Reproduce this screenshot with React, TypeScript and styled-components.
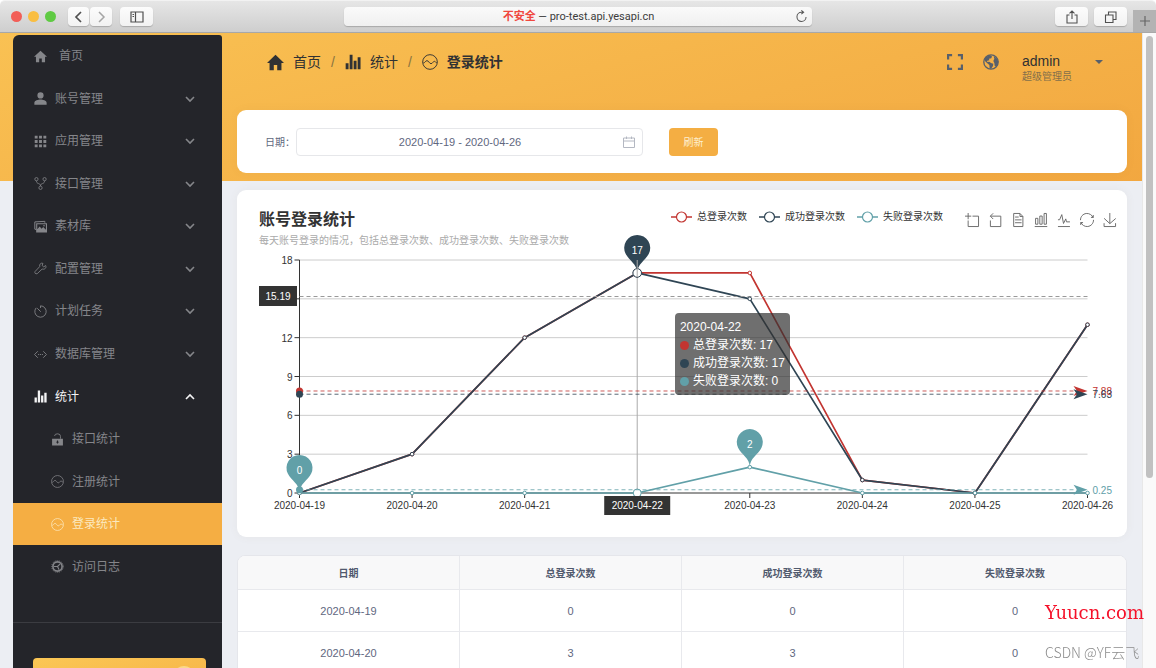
import React from "react";
import styled, { createGlobalStyle } from "styled-components";

const sans = `"Liberation Sans", "Noto Sans CJK SC", sans-serif`;
const ui = `Roboto, "Noto Sans CJK SC", sans-serif`;

const Global = createGlobalStyle`
  *, *::before, *::after { box-sizing: border-box; }
  body { margin: 0; background: #fff; font-family: ${sans}; font-size: 12px; overflow: hidden; }
  button { font-family: inherit; border: 0; padding: 0; background: none; cursor: pointer; }
  a { color: inherit; text-decoration: none; }
`;

/* ---------- icons ---------- */

const Glyph = styled.svg<{ $size: number; $stroke?: number }>`
  display: block;
  flex: none;
  width: ${(p) => p.$size}px;
  height: ${(p) => p.$size}px;
  fill: ${(p) => (p.$stroke ? "none" : "currentColor")};
  stroke: ${(p) => (p.$stroke ? "currentColor" : "none")};
  stroke-width: ${(p) => p.$stroke ?? 0};
`;

type IconDef = { box: string; d: string; stroke?: number };

const icons: Record<string, IconDef> = {
  home: { box: "2 2 20 20", d: "M10 21v-6h4v6h5v-8.500h3L12 3 2 12.500h3V21z" },
  person: { box: "3 3 18 18", d: "M12 12a4.300 4.300 0 1 0 0-8.600 4.300 4.300 0 0 0 0 8.600zM12 13.500c-3 0-8.500 1.500-8.500 4.500v2.500h17V18c0-3-5.500-4.500-8.500-4.500z" },
  apps: { box: "3 3 18 18", d: "M4 8h4V4H4zm6 12h4v-4h-4zm-6 0h4v-4H4zm0-6h4v-4H4zm6 0h4v-4h-4zm6-10v4h4V4zm-6 4h4V4h-4zm6 6h4v-4h-4zm0 6h4v-4h-4z" },
  fork: { box: "0 0 24 24", stroke: 1.5, d: "M4.500 7a3 3 0 1 0 0-6 3 3 0 0 0 0 6zM19.500 7a3 3 0 1 0 0-6 3 3 0 0 0 0 6zM12 23a3 3 0 1 0 0-6 3 3 0 0 0 0 6zM4.500 7c0 3 1.500 4.500 3.500 5s4 1.500 4 4.500M19.500 7c0 3-1.500 4.500-3.500 5s-4 1.500-4 4.500" },
  code: { box: "0 0 24 24", stroke: 1.6, d: "M7 6l-6 6 6 6M17 6l6 6-6 6M7.500 12h2M11 12h2M14.500 12h2" },
  timer: { box: "0 0 24 24", stroke: 1.6, d: "M12 1.500a10.500 10.500 0 1 1-8 3.700M12 1.500v4M6 6l6.500 6.500" },
  wrench: { box: "0 0 24 24", stroke: 1.5, d: "M21.500 6.500l-3.500 2.500-3-2.500 1.500-4C13 1 9.500 4 10.500 8.500L2 17.500c-1.500 2 .5 5.500 4 4l9-8.500c5 1.500 8.500-2.500 6.500-6.500z" },
  bars: { box: "0 0 24 24", d: "M1 14h4.300v9H1zM7 1h4.300v22H7zM13 10h4.300v13H13zM19 5h4.300v18H19z" },
  wave: { box: "0 0 24 24", stroke: 1.4, d: "M12 1a11 11 0 1 0 0 22 11 11 0 0 0 0-22zM2 13.500c2.500 0 3-3.500 5.500-3.500s3.500 4.500 6 4.500 3-3.500 5-3.500 2 2 3.500 2" },
  corners: { box: "0 0 16 16", stroke: 2.2, d: "M1.100 5.500V1.200h4M10.900 1.200h4v4.300M14.900 10.500v4.300h-4M5.100 14.800h-4v-4.300" },
  down: { box: "0 0 12 12", stroke: 1.6, d: "M2 4l4 4 4-4" },
  up: { box: "0 0 12 12", stroke: 1.6, d: "M2 8l4-4 4 4" },
  caret: { box: "0 0 10 10", d: "M1 3h8L5 7z" },
  back: { box: "0 0 14 14", stroke: 1.7, d: "M9 2L4 7l5 5" },
  forward: { box: "0 0 14 14", stroke: 1.5, d: "M5 2l5 5-5 5" },
  panel: { box: "0 0 14 14", stroke: 1.2, d: "M1 2h12v10H1zM5.500 2v10M2.500 4.500h1.500M2.500 6.500h1.500" },
  share: { box: "0 0 14 14", stroke: 1.1, d: "M4.500 5H2v8h10V5H9.500M7 9V1M4.500 3.300L7 1l2.500 2.300" },
  tabs: { box: "0 0 14 14", stroke: 1.1, d: "M1.500 5h7.500v7.500H1.500zM4.500 5V2H12v7.500H9" },
  plus: { box: "0 0 12 12", stroke: 1.2, d: "M6 1v10M1 6h10" },
  reload: { box: "0 0 14 14", stroke: 1.1, d: "M8.500 2.500H7A4.900 4.900 0 1 0 11.900 7.500M6.800 0.500l2.500 2-2.500 2" },
  calendar: { box: "0 0 12 12", stroke: 1, d: "M.5 2h11v9.500H.5zM.5 5h11M3.500 0.500v2.500M8.500 0.500v2.500" },
};

const Icon = ({ name, size }: { name: string; size: number }) => {
  const def = icons[name];
  return (
    <Glyph viewBox={def.box} $size={size} $stroke={def.stroke} aria-hidden>
      <path d={def.d} />
    </Glyph>
  );
};

const GlobeIcon = () => (
  <Glyph viewBox="0 0 24 24" $size={16} aria-hidden>
    <circle cx="12" cy="12" r="10.800" fill="none" stroke="currentColor" strokeWidth="2" />
    <path d="M3 5.500L10 1.500l3.500 2-1 3-3.500.5.500 2.500-3 .5-.5 2 3.500-.5 2.500 2 3.500 1-.5 3.500-3 4.500-2-1-.5-5-3.500-3-3.500-3.500zM16 3.500l4 2.500 3 5-1 5-2.500 3-2-1.500-.5-4-1.500-3 1.500-3.500z" />
  </Glyph>
);

const GalleryIcon = () => (
  <Glyph viewBox="0 0 24 24" $size={13} aria-hidden>
    <path d="M4 17.500L1.500 17V3.500L20 2.500V5" fill="none" stroke="currentColor" strokeWidth="1.800" />
    <path fillRule="evenodd" d="M4 6h20v17H4zM6 8v9l4.500-5 3.500 4 3-3 5 5V8z" />
    <circle cx="18.500" cy="10.500" r="1.500" />
  </Glyph>
);

const LockIcon = () => (
  <Glyph viewBox="0 0 24 24" $size={13} aria-hidden>
    <path d="M6.500 5.500a5.500 4.500 0 0 1 11 1V10.500" fill="none" stroke="currentColor" strokeWidth="1.500" />
    <path fillRule="evenodd" d="M2 10.500h20V23H2zM11 14v2H9.500v1.500H11v2h2v-2h1.500V16H13v-2z" />
  </Glyph>
);

const LogIcon = () => (
  <Glyph viewBox="0 0 24 24" $size={13} aria-hidden>
    <circle cx="12" cy="12" r="8.500" fill="none" stroke="currentColor" strokeWidth="3" />
    <circle cx="12" cy="12" r="10.800" fill="none" stroke="currentColor" strokeWidth="1.500" strokeDasharray="2 2" />
    <path d="M12 12l5-5M12 12H5M12 12l3 6" fill="none" stroke="currentColor" strokeWidth="2" />
  </Glyph>
);

/* ---------- browser chrome ---------- */

const Window = styled.div`
  display: flex;
  flex-direction: column;
  height: 100vh;
  overflow: hidden;
`;

const TitleBar = styled.header`
  display: grid;
  grid-template-columns: 1fr 468px 1fr;
  align-items: center;
  flex: none;
  height: 33px;
  border-bottom: 1px solid #a8a8a8;
  border-top: 1px solid #f2f2f2;
  border-radius: 5px 5px 0 0;
  background: linear-gradient(#e6e6e6, #cecece);
`;

const BarGroup = styled.div<{ $end?: boolean }>`
  display: flex;
  align-items: center;
  justify-content: ${(p) => (p.$end ? "flex-end" : "flex-start")};
  gap: 6px;
  height: 31px;
  padding-left: ${(p) => (p.$end ? 0 : 11)}px;
`;

const Light = styled.span<{ $color: string }>`
  width: 11px;
  height: 11px;
  border-radius: 50%;
  background: ${(p) => p.$color};
`;

const Segments = styled.div`
  display: flex;
  gap: 1px;
  margin: 0 2px 0 6px;
`;

const ChromeButton = styled.button<{ $width: number; $dim?: boolean }>`
  display: grid;
  place-items: center;
  width: ${(p) => p.$width}px;
  height: 19px;
  border-radius: 4px;
  background: linear-gradient(#fcfcfc, #f2f2f2);
  box-shadow: 0 1px 1px rgba(0, 0, 0, 0.2);
  color: ${(p) => (p.$dim ? "#a5a5a5" : "#505050")};
`;

const Tabs = styled.div`
  display: flex;
  align-items: center;
  align-self: stretch;
`;

const Address = styled.button`
  display: flex;
  align-items: center;
  height: 19px;
  padding: 0 4px 0 18px;
  border-radius: 4px;
  background: linear-gradient(#fafafa, #f0f0f0);
  box-shadow: 0 1px 1px rgba(0, 0, 0, 0.2);
  color: #555;
  font-family: ${ui};
  font-size: 11px;
  line-height: 16px;
`;

const AddressText = styled.span`
  flex: 1;
  color: #3c3c3c;
`;

const Unsafe = styled.span`
  color: #f0483e;
  font-weight: 700;
`;

const NewTab = styled.button`
  display: grid;
  place-items: center;
  align-self: flex-end;
  width: 23px;
  height: 22px;
  background: #b3b3b3;
  color: #666;
`;

/* ---------- page frame ---------- */

const Page = styled.div`
  display: flex;
  flex: 1;
  min-height: 0;
  padding-left: 13px;
  background: linear-gradient(165deg, #f9c153, #f2a740) 0 0 / 100% 148px no-repeat #eceef3;
`;

const Sidebar = styled.aside`
  flex: none;
  width: 209px;
  margin-top: 2px;
  border-radius: 6px 3px 0 0;
  background: #24252a;
  overflow: hidden;
`;

const Nav = styled.nav`
  display: grid;
  grid-auto-rows: 1fr;
  height: 553px;
`;

const NavItem = styled.a<{ $sub?: boolean; $home?: boolean; $state?: "open" | "current" }>`
  display: flex;
  align-items: center;
  gap: ${(p) => (p.$home ? 12 : 8)}px;
  padding: 0 26px 0 ${(p) => (p.$sub ? 38 : 21)}px;
  font-size: 12px;
  line-height: 18px;
  text-align: left;
  color: ${(p) => (p.$state === "open" ? "#f4f4f5" : p.$state === "current" ? "#fbe9bf" : "#85868a")};
  background: ${(p) => (p.$state === "current" ? "#f5ae43" : "transparent")};
`;

const NavText = styled.span`
  flex: 1;
`;

const SidebarFoot = styled.div`
  margin-top: 34px;
  padding: 35px 16px 0 20px;
  border-top: 1px solid #3b3c41;
`;

const Promo = styled.button`
  display: flex;
  justify-content: flex-end;
  width: 100%;
  height: 60px;
  padding: 8px 11px;
  border-radius: 4px;
  background: linear-gradient(165deg, #fbc755, #f4ad43);
`;

const PromoBadge = styled.span`
  width: 22px;
  height: 22px;
  border-radius: 50%;
  background: #fbd98a;
`;

const Main = styled.main`
  display: flex;
  flex: 1;
  flex-direction: column;
  min-width: 0;
  padding: 0 15px;
`;

const Scroll = styled.div`
  flex: none;
  width: 14px;
  padding: 3px 3px 0 3px;
  border-left: 1px solid #e8e8e8;
  background: #fafafa;
`;

const Thumb = styled.div`
  width: 7px;
  height: 442px;
  border-radius: 4px;
  background: #c1c1c1;
`;

/* ---------- top of the page ---------- */

const TopBar = styled.div`
  display: flex;
  flex: none;
  align-items: flex-start;
  height: 77px;
  padding: 19px 23px 0 30px;
  color: #58606b;
`;

const Crumbs = styled.nav`
  display: flex;
  flex: 1;
  align-items: center;
  height: 20px;
  gap: 9px;
  color: #303133;
  font-size: 14px;
  line-height: 20px;
`;

const Slash = styled.span`
  color: #8a7440;
  padding: 0 1px;
`;

const Current = styled.strong`
  font-weight: 700;
`;

const Tools = styled.div`
  display: flex;
  gap: 20px;
  margin-right: 23px;
`;

const Tool = styled.button`
  display: grid;
  place-items: center;
  height: 20px;
  color: inherit;
`;

const User = styled.div`
  width: 72px;
`;

const UserName = styled.div`
  color: #303133;
  font-size: 14px;
  line-height: 18px;
`;

const UserRole = styled.div`
  color: #84704a;
  font-size: 10px;
  line-height: 14px;
`;

const Card = styled.section`
  flex: none;
  margin-bottom: 17px;
  border-radius: 9px;
  background: #fff;
  box-shadow: 0 0 10px rgba(120, 100, 60, 0.06);
`;

const Filter = styled(Card)`
  display: flex;
  align-items: center;
  height: 63px;
  padding: 0 28px;
`;

const Label = styled.label`
  width: 31px;
  color: #5f6780;
  font-size: 10px;
`;

const DateField = styled.div`
  display: flex;
  align-items: center;
  width: 347px;
  height: 28px;
  margin-right: 26px;
  padding: 0 7px 0 0;
  border: 1px solid #e6e7ea;
  border-radius: 4px;
  color: #b4b8c2;
`;

const DateInput = styled.input`
  flex: 1;
  min-width: 0;
  border: 0;
  outline: 0;
  background: none;
  color: #5f6780;
  font-family: ${sans};
  font-size: 11px;
  text-align: center;
`;

const Refresh = styled.button`
  width: 49px;
  height: 28px;
  border-radius: 4px;
  background: #f4ae43;
  color: #fdf0d2;
  font-size: 10px;
`;

/* ---------- chart ---------- */

const ChartCard = styled(Card)`
  padding-bottom: 1px;
`;

const ChartHead = styled.div`
  display: flex;
  height: 62px;
  padding: 18px 10px 0 22px;
`;

const Titles = styled.div`
  flex: 1;
`;

const ChartTitle = styled.h2`
  margin: 0;
  color: #333;
  font-size: 16px;
  font-weight: 700;
  line-height: 23px;
`;

const Subtitle = styled.p`
  margin: 0;
  color: #aaa;
  font-size: 10px;
  line-height: 20px;
`;

const Legend = styled.div`
  display: flex;
  gap: 12px;
  height: 18px;
  margin-right: 22px;
`;

const LegendItem = styled.button`
  display: flex;
  align-items: center;
  gap: 5px;
  color: #333;
  font-size: 10px;
  line-height: 18px;
`;

const LegendMark = styled.svg`
  width: 21px;
  height: 12px;
`;

const Toolbox = styled.div`
  display: flex;
  gap: 9px;
  height: 14px;
  margin-top: 5px;
  color: #666;
`;

const ToolButton = styled.button`
  color: inherit;
`;

const ToolGlyph = styled.svg`
  display: block;
  width: 14px;
  height: 14px;
  overflow: visible;
  fill: none;
  stroke: currentColor;
  stroke-width: 4;
`;

const Plot = styled.div`
  position: relative;
`;

const PlotSvg = styled.svg`
  display: block;
  width: 100%;
  overflow: visible;
  font-family: ${sans};
  font-size: 10px;
`;

const Tip = styled.div`
  position: absolute;
  left: 49.2%;
  top: 61px;
  padding: 5px;
  border-radius: 4px;
  background: rgba(50, 50, 50, 0.7);
  color: #fff;
  font-size: 12px;
  line-height: 18px;
  white-space: nowrap;
`;

const TipRow = styled.div`
  display: flex;
  align-items: center;
  gap: 4px;
`;

const TipDot = styled.span<{ $color: string }>`
  width: 9px;
  height: 9px;
  border-radius: 50%;
  background: ${(p) => p.$color};
`;

const dates = ["2020-04-19", "2020-04-20", "2020-04-21", "2020-04-22", "2020-04-23", "2020-04-24", "2020-04-25", "2020-04-26"];
const series = [
  { name: "总登录次数", color: "#c23531", values: [0, 3, 12, 17, 17, 1, 0, 13], mean: 7.88 },
  { name: "成功登录次数", color: "#2f4554", values: [0, 3, 12, 17, 15, 1, 0, 13], mean: 7.63 },
  { name: "失败登录次数", color: "#61a0a8", values: [0, 0, 0, 0, 2, 0, 0, 0], mean: 0.25 },
];
const LEFT = 62.5;
const RIGHT = 850.5;
const BASE = 241;
const TOP = 8;
const hovered = 3;
const px = (i: number) => LEFT + (i * (RIGHT - LEFT)) / 7;
const py = (v: number) => BASE - (v * (BASE - TOP)) / 18;

const tools = [
  { label: "区域缩放", d: "M0,13.5h26.900 M13.500,26.900V0 M32.100,13.500H58V58H13.500 V32.100" },
  { label: "区域缩放还原", d: "M22,1.400L9.900,13.500l12.300,12.300 M10.300,13.500H54.900v44.600 H10.300v-26" },
  { label: "数据视图", d: "M17.500,17.300H33 M45.400,29.500h-28 M11.500,2v56H51V14.800L38.400,2H11.500z M38.400,2.200v12.700H51 M45.400,41.700h-28" },
  { label: "切换为柱状图", d: "M6.700,22.900h10V48h-10V22.900zM24.900,13h10v35h-10V13zM43.200,2h10v46h-10V2zM3.100,58h53.700" },
  { label: "切换为折线图", d: "M4.100,28.900h7.100l9.300-22l7.400,38l9.700-19.700l3,12.800h14.900M4.100,58h51.400" },
  { label: "还原", d: "M47,18.900h9.800V8.700 M56.300,20.100 C52.100,9,40.500,0.600,26.800,2.100C12.600,3.700,1.600,16.200,2.100,30.600 M13,41.100H3.100v10.200 M3.700,39.900c4.200,11.100,15.800,19.500,29.500,18 c14.200-1.600,25.200-14.100,24.700-28.500" },
  { label: "保存为图片", d: "M4.700,22.900L29.300,45.500L54.700,23.400M4.600,43.600L4.600,58L53.800,58L53.800,43.600M29.200,45.100L29.200,0" },
];

const Pin = ({ x, y, color, text }: { x: number; y: number; color: string; text: string }) => (
  <g transform={`translate(${x} ${y})`}>
    <path d="M-11.700 -19.400A13 13 0 1 1 11.700 -19.400C8.400 -12.400 0 -9.100 0 0C0 -9.100 -8.400 -12.400 -11.700 -19.400Z" fill={color} />
    <text y={-19} textAnchor="middle" fill="#fff">{text}</text>
  </g>
);

const Chart = () => (
  <Plot>
    <PlotSvg viewBox="0 0 890 284" role="img" aria-label="账号登录统计">
      {[3, 6, 9, 12, 15, 18].map((v) => (
        <line key={v} x1={LEFT} x2={RIGHT} y1={py(v)} y2={py(v)} stroke="#ccc" />
      ))}
      {[0, 3, 6, 9, 12, 15, 18].map((v) => (
        <g key={v}>
          <line x1={LEFT - 5} x2={LEFT} y1={py(v)} y2={py(v)} stroke="#333" />
          {v !== 15 && <text x={LEFT - 7} y={py(v) + 4} textAnchor="end" fill="#333">{v}</text>}
        </g>
      ))}
      <path d={`M${LEFT} ${TOP}V${BASE}H${RIGHT}`} fill="none" stroke="#333" />
      {dates.map((d, i) => (
        <g key={d}>
          <line x1={px(i)} x2={px(i)} y1={BASE} y2={BASE + 5} stroke="#333" />
          {i !== hovered && <text x={px(i)} y={BASE + 16} textAnchor="middle" fill="#333">{d}</text>}
        </g>
      ))}

      {series.map((s) => (
        <polyline key={s.name} points={s.values.map((v, i) => `${px(i)},${py(v)}`).join(" ")} fill="none" stroke={s.color} strokeWidth={1.7} strokeLinejoin="bevel" />
      ))}
      <line x1={px(hovered)} x2={px(hovered)} y1={TOP} y2={BASE} stroke="#aaa" />
      <line x1={LEFT} x2={RIGHT} y1={44.5} y2={44.5} stroke="#999" strokeDasharray="4 3" />
      {series.map((s) => (
        <g key={s.name}>
          {s.values.map((v, i) => (
            <circle key={i} cx={px(i)} cy={py(v)} r={i === hovered ? 4 : 1.8} fill="#fff" stroke={s.color} />
          ))}
        </g>
      ))}
      {series.map((s) => (
        <g key={s.name}>
          <line x1={LEFT} x2={RIGHT - 8} y1={py(s.mean)} y2={py(s.mean)} stroke={s.color} strokeOpacity={0.8} strokeDasharray="4 3" />
          <circle cx={LEFT} cy={py(s.mean)} r={3.5} fill={s.color} />
          <path d={`M${RIGHT} ${py(s.mean)}l-14 -5l3.500 5l-3.500 5z`} fill={s.color} />
          <text x={RIGHT + 5} y={py(s.mean) + 4} fill={s.color}>{s.mean.toFixed(2)}</text>
        </g>
      ))}
      <Pin x={px(3)} y={py(17)} color="#2f4554" text="17" />
      <circle cx={px(3)} cy={py(17)} r={4.3} fill="#fff" stroke="#2f4554" />
      <line x1={px(3)} x2={px(3)} y1={TOP} y2={py(17) + 4} stroke="#aaa" />
      <Pin x={px(0)} y={py(0)} color="#61a0a8" text="0" />
      <Pin x={px(4)} y={py(2)} color="#61a0a8" text="2" />

      <rect x={22} y={34} width={38} height={20} fill="#333" />
      <text x={41} y={47.500} textAnchor="middle" fill="#fff">15.19</text>
      <rect x={px(3) - 33} y={244} width={66} height={19} fill="#333" />
      <text x={px(3)} y={257} textAnchor="middle" fill="#fff">2020-04-22</text>
    </PlotSvg>
    <Tip>
      <div>{dates[hovered]}</div>
      {series.map((s) => (
        <TipRow key={s.name}>
          <TipDot $color={s.color} />
          <span>{s.name}: {s.values[hovered]}</span>
        </TipRow>
      ))}
    </Tip>
  </Plot>
);

/* ---------- table ---------- */

const TableFrame = styled.div`
  flex: none;
  margin-top: 1px;
  border: 1px solid #e5e6eb;
  border-radius: 8px 8px 0 0;
  background: #fff;
  overflow: hidden;
`;

const Table = styled.table`
  width: 100%;
  border-collapse: separate;
  border-spacing: 0;
  table-layout: fixed;
  color: #5f6780;
  text-align: center;
`;

const Th = styled.th`
  height: 34px;
  padding: 0;
  border-bottom: 1px solid #e8e9ed;
  border-right: 1px solid #e8e9ed;
  background: #f8f8f9;
  color: #515a6e;
  font-size: 10px;
  font-weight: 700;
  &:last-child { border-right: 0; }
`;

const Td = styled.td`
  height: 42px;
  padding: 0;
  border-bottom: 1px solid #e8e9ed;
  border-right: 1px solid #e8e9ed;
  font-size: 11px;
  &:last-child { border-right: 0; }
`;

/* ---------- watermarks ---------- */

const Marks = styled.div`
  position: fixed;
  right: 12px;
  bottom: 6px;
  display: flex;
  flex-direction: column;
  gap: 18px;
`;

const SiteMark = styled.span`
  color: #f5112a;
  font-family: "DejaVu Serif", serif;
  font-size: 18px;
  line-height: 22px;
`;

const AuthorMark = styled.span`
  color: #8c8c8c;
  font-family: "Noto Sans CJK SC", sans-serif;
  font-size: 14px;
  font-weight: 300;
  line-height: 20px;
`;

const groups = [
  { text: "账号管理", icon: <Icon name="person" size={13} /> },
  { text: "应用管理", icon: <Icon name="apps" size={13} /> },
  { text: "接口管理", icon: <Icon name="fork" size={13} /> },
  { text: "素材库", icon: <GalleryIcon /> },
  { text: "配置管理", icon: <Icon name="wrench" size={13} /> },
  { text: "计划任务", icon: <Icon name="timer" size={13} /> },
  { text: "数据库管理", icon: <Icon name="code" size={13} /> },
];

const pages = [
  { text: "接口统计", icon: <LockIcon /> },
  { text: "注册统计", icon: <Icon name="wave" size={13} /> },
  { text: "登录统计", icon: <Icon name="wave" size={13} />, current: true },
  { text: "访问日志", icon: <LogIcon /> },
];

export default function App() {
  return (
    <Window>
      <Global />
      <TitleBar>
        <BarGroup>
          <Light $color="#f25e57" />
          <Light $color="#f9be42" />
          <Light $color="#5fca43" />
          <Segments>
            <ChromeButton $width={21} aria-label="后退"><Icon name="back" size={14} /></ChromeButton>
            <ChromeButton $width={22} $dim aria-label="前进"><Icon name="forward" size={14} /></ChromeButton>
          </Segments>
          <ChromeButton $width={33} aria-label="边栏"><Icon name="panel" size={14} /></ChromeButton>
        </BarGroup>
        <Address>
          <AddressText><Unsafe>不安全</Unsafe> — pro-test.api.yesapi.cn</AddressText>
          <Icon name="reload" size={13} />
        </Address>
        <BarGroup $end>
          <ChromeButton $width={33} aria-label="共享"><Icon name="share" size={14} /></ChromeButton>
          <Tabs>
            <ChromeButton $width={33} aria-label="标签页"><Icon name="tabs" size={14} /></ChromeButton>
          </Tabs>
          <NewTab aria-label="新标签页"><Icon name="plus" size={12} /></NewTab>
        </BarGroup>
      </TitleBar>

      <Page>
        <Sidebar>
          <Nav>
            <NavItem href="#home" $home><Icon name="home" size={13} /><NavText>首页</NavText></NavItem>
            {groups.map((g) => (
              <NavItem as="button" key={g.text}>
                {g.icon}<NavText>{g.text}</NavText><Icon name="down" size={12} />
              </NavItem>
            ))}
            <NavItem as="button" $state="open" aria-expanded>
              <Icon name="bars" size={13} /><NavText>统计</NavText><Icon name="up" size={12} />
            </NavItem>
            {pages.map((p) => (
              <NavItem key={p.text} href={`#${p.text}`} $sub $state={p.current ? "current" : undefined}>
                {p.icon}<NavText>{p.text}</NavText>
              </NavItem>
            ))}
          </Nav>
          <SidebarFoot>
            <Promo aria-label="升级"><PromoBadge /></Promo>
          </SidebarFoot>
        </Sidebar>

        <Main>
          <TopBar>
            <Crumbs>
              <Icon name="home" size={17} /><a href="#home">首页</a><Slash>/</Slash>
              <Icon name="bars" size={16} /><a href="#stats">统计</a><Slash>/</Slash>
              <Icon name="wave" size={16} /><Current>登录统计</Current>
            </Crumbs>
            <Tools>
              <Tool aria-label="全屏"><Icon name="corners" size={16} /></Tool>
              <Tool aria-label="语言"><GlobeIcon /></Tool>
            </Tools>
            <User>
              <UserName>admin</UserName>
              <UserRole>超级管理员</UserRole>
            </User>
            <Tool aria-label="用户菜单"><Icon name="caret" size={10} /></Tool>
          </TopBar>

          <Filter>
            <Label htmlFor="range">日期：</Label>
            <DateField>
              <DateInput id="range" defaultValue="2020-04-19 - 2020-04-26" />
              <Icon name="calendar" size={12} />
            </DateField>
            <Refresh>刷新</Refresh>
          </Filter>

          <ChartCard>
            <ChartHead>
              <Titles>
                <ChartTitle>账号登录统计</ChartTitle>
                <Subtitle>每天账号登录的情况，包括总登录次数、成功登录次数、失败登录次数</Subtitle>
              </Titles>
              <Legend>
                {series.map((s) => (
                  <LegendItem key={s.name}>
                    <LegendMark viewBox="0 0 21 12">
                      <line x1="0" x2="21" y1="6" y2="6" stroke={s.color} strokeWidth="1.500" />
                      <circle cx="10.500" cy="6" r="5" fill="#fff" stroke={s.color} strokeWidth="1.200" />
                    </LegendMark>
                    {s.name}
                  </LegendItem>
                ))}
              </Legend>
              <Toolbox>
                {tools.map((t) => (
                  <ToolButton key={t.label} aria-label={t.label}>
                    <ToolGlyph viewBox="0 0 60 60"><path d={t.d} /></ToolGlyph>
                  </ToolButton>
                ))}
              </Toolbox>
            </ChartHead>
            <Chart />
          </ChartCard>

          <TableFrame>
            <Table>
              <thead>
                <tr><Th>日期</Th><Th>总登录次数</Th><Th>成功登录次数</Th><Th>失败登录次数</Th></tr>
              </thead>
              <tbody>
                {dates.slice(0, 2).map((d, i) => (
                  <tr key={d}>
                    <Td>{d}</Td>
                    {series.map((s) => <Td key={s.name}>{s.values[i]}</Td>)}
                  </tr>
                ))}
              </tbody>
            </Table>
          </TableFrame>
        </Main>

        <Scroll><Thumb /></Scroll>
      </Page>

      <Marks>
        <SiteMark>Yuucn.com</SiteMark>
        <AuthorMark>CSDN @YF云飞</AuthorMark>
      </Marks>
    </Window>
  );
}
